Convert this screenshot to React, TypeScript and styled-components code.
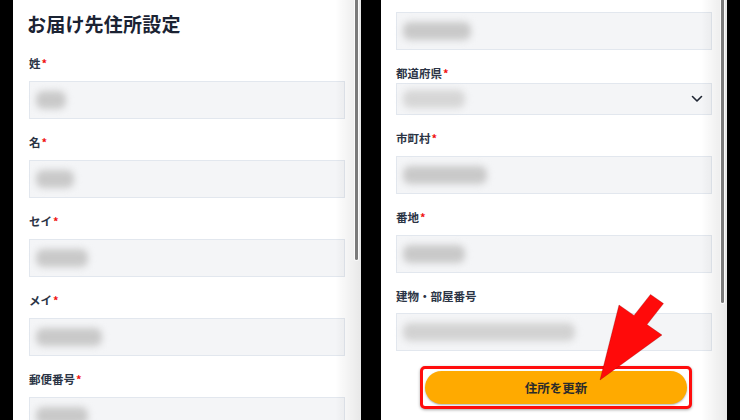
import React from "react";
import styled, { createGlobalStyle } from "styled-components";

const Global = createGlobalStyle`
  html, body { margin: 0; padding: 0; background: #000; }
  body { font-family: "Noto Sans CJK JP", "Noto Sans", sans-serif; }
`;

const Page = styled.div`
  width: 740px;
  height: 420px;
  background: #000;
  display: flex;
  gap: 20px;
  padding: 0 13px;
  box-sizing: border-box;
  overflow: hidden;
`;

const Panel = styled.div<{ $w: number; $pt: number; $px: number }>`
  position: relative;
  width: ${(p) => p.$w}px;
  height: 420px;
  background: #fff;
  padding: ${(p) => p.$pt}px ${(p) => p.$px}px 0;
  box-sizing: border-box;
  overflow: hidden;
  flex-shrink: 0;
  &::after {
    content: "";
    position: absolute;
    top: 0;
    right: 0;
    width: 26px;
    height: 100%;
    background: linear-gradient(to right, rgba(0, 0, 0, 0), rgba(0, 0, 0, 0.09));
    pointer-events: none;
  }
`;

const ScrollThumb = styled.div<{ $h: number; $right: number }>`
  position: absolute;
  top: 0;
  right: ${(p) => p.$right}px;
  width: 3px;
  height: ${(p) => p.$h}px;
  background: #7a7a7a;
  border-radius: 0 0 2px 2px;
  box-shadow: 0 0 0 1px rgba(255, 255, 255, 0.7);
  z-index: 2;
`;

const Title = styled.h1`
  margin: 0 0 0 -2px;
  font-size: 19px;
  line-height: 24px;
  font-weight: 700;
  color: #1b2333;
  letter-spacing: 0.2px;
`;

const Form = styled.div<{ $mt: number }>`
  display: flex;
  flex-direction: column;
  gap: 14px;
  margin-top: ${(p) => p.$mt}px;
`;

const Field = styled.div<{ $gap: number }>`
  display: flex;
  flex-direction: column;
  gap: ${(p) => p.$gap}px;
`;

const Label = styled.div`
  font-size: 11.5px;
  line-height: 18px;
  font-weight: 700;
  color: #2b3445;
`;

const Req = styled.span`
  color: #f01010;
  font-size: 11px;
  margin-left: 1px;
`;

const Box = styled.div<{ $h: number }>`
  height: ${(p) => p.$h}px;
  box-sizing: border-box;
  background: #f4f5f7;
  border: 1px solid #e2e7ee;
  display: flex;
  align-items: center;
  justify-content: space-between;
  padding: 0 10px 0 6px;
`;

const Blur = styled.span<{ $w: number; $c: string }>`
  display: block;
  width: ${(p) => p.$w}px;
  height: 18px;
  border-radius: 7px;
  background: ${(p) => p.$c};
  filter: blur(3.5px);
`;

const Chevron = styled.svg`
  width: 12px;
  height: 8px;
  margin-right: -2px;
`;

const Frame = styled.div`
  margin: 1px 20px 0 24px;
  border: 3px solid #ff0d0d;
  border-radius: 5px;
  padding: 2px;
  box-shadow: 0 1px 3px rgba(0, 0, 0, 0.35);
  background: #fff;
`;

const UpdateButton = styled.button`
  width: 100%;
  height: 33px;
  border: none;
  border-radius: 17px;
  background: #ffaa00;
  box-shadow: 0 1px 2px rgba(0, 0, 0, 0.3);
  font-family: "Noto Sans CJK JP", sans-serif;
  font-size: 12.5px;
  font-weight: 700;
  color: #2b2b2b;
  display: flex;
  align-items: center;
  justify-content: center;
  padding: 0;
`;

const Arrow = styled.svg`
  position: absolute;
  left: 0;
  top: 0;
  width: 346px;
  height: 420px;
  pointer-events: none;
  z-index: 3;
`;

type FieldDef = { label: string; req?: boolean; blur: number; color?: string; gap?: number; h?: number; select?: boolean };

const leftFields: FieldDef[] = [
  { label: "姓", req: true, blur: 30 },
  { label: "名", req: true, blur: 38 },
  { label: "セイ", req: true, blur: 52 },
  { label: "メイ", req: true, blur: 66 },
  { label: "郵便番号", req: true, blur: 52 },
];

const rightFields: FieldDef[] = [
  { label: "都道府県", req: true, blur: 62, gap: 1, h: 32, select: true, color: "#d6d6d6" },
  { label: "市町村", req: true, blur: 84, gap: 9 },
  { label: "番地", req: true, blur: 62, gap: 9 },
  { label: "建物・部屋番号", blur: 172, gap: 8, color: "#d2d2d2" },
];

function Input({ f }: { f: FieldDef }) {
  return (
    <Box $h={f.h ?? 38}>
      <Blur $w={f.blur} $c={f.color ?? "#c9c9c9"} />
      {f.select && (
        <Chevron viewBox="0 0 12 8">
          <path d="M1.5 1.5 6 6l4.5-4.5" fill="none" stroke="#1f2633" strokeWidth="1.6" strokeLinecap="round" strokeLinejoin="round" />
        </Chevron>
      )}
    </Box>
  );
}

function FormField({ f }: { f: FieldDef }) {
  return (
    <Field $gap={f.gap ?? 9}>
      <Label>
        {f.label}
        {f.req && <Req>*</Req>}
      </Label>
      <Input f={f} />
    </Field>
  );
}

export default function App() {
  // arrow geometry in right-panel coordinates (panel left = 381)
  const ox = 381;
  const pts: [number, number][] = [
    [650.5, 294.4],
    [663.5, 303.6],
    [647, 324.6],
    [662, 335],
    [600, 380],
    [619, 305],
    [634, 315.4],
  ];
  const poly = pts.map(([x, y]) => `${x - ox},${y}`).join(" ");
  return (
    <>
      <Global />
      <Page>
        <Panel $w={348} $pt={12} $px={16}>
          <Title>お届け先住所設定</Title>
          <Form $mt={18}>
            {leftFields.map((f) => (
              <FormField key={f.label} f={f} />
            ))}
          </Form>
          <ScrollThumb $h={260} $right={3} />
        </Panel>
        <Panel $w={346} $pt={12} $px={15}>
          <Field $gap={0}>
            <Input f={{ label: "", blur: 68 }} />
          </Field>
          <Form $mt={14}>
            {rightFields.map((f) => (
              <FormField key={f.label} f={f} />
            ))}
            <Frame>
              <UpdateButton>住所を更新</UpdateButton>
            </Frame>
          </Form>
          <ScrollThumb $h={303} $right={3} />
          <Arrow viewBox="0 0 346 420">
            <polygon points={poly} fill="#ff0a0a" stroke="rgba(120,0,0,0.35)" strokeWidth="0.8" strokeLinejoin="round" />
          </Arrow>
        </Panel>
      </Page>
    </>
  );
}
